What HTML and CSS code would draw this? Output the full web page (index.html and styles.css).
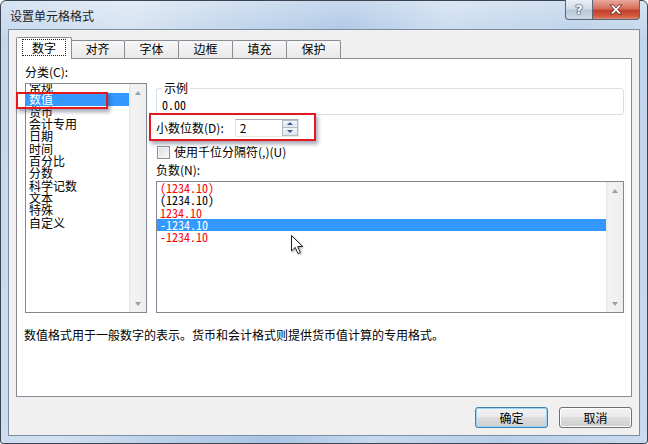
FILE: index.html
```html
<!DOCTYPE html>
<html lang="zh-CN">
  <head>
    <meta charset="UTF-8" />
    <title>设置单元格格式</title>
    <link rel="stylesheet" href="styles.css">
  </head>
  <body>
    <div class="window">
      <div class="titlebar">
        <span class="title">设置单元格格式</span>
        <div class="caption-buttons">
          <span class="btn-help">?</span>
          <span class="btn-close">
            <svg width="14" height="11" viewBox="0 0 14 11">
              <path d="M1 1 H4.5 L7 3.8 L9.5 1 H13 L8.8 5.5 L13 10 H9.5 L7 7.2 L4.5 10 H1 L5.2 5.5 Z" fill="#fff" stroke="#5a2019" stroke-width="0.8" />
            </svg>
          </span>
        </div>
      </div>

      <div class="client">
        <div class="tabs">
          <div class="tab active"><span class="focus">数字</span></div>
          <div class="tab">对齐</div>
          <div class="tab">字体</div>
          <div class="tab">边框</div>
          <div class="tab">填充</div>
          <div class="tab">保护</div>
        </div>

        <div class="panel">
          <div class="columns">
            <div class="col-left">
              <div class="label">分类(<u>C</u>):</div>
              <div class="listbox category">
                <ul class="items">
                  <li>常规</li>
                  <li class="selected">数值</li>
                  <li>货币</li>
                  <li>会计专用</li>
                  <li>日期</li>
                  <li>时间</li>
                  <li>百分比</li>
                  <li>分数</li>
                  <li>科学记数</li>
                  <li>文本</li>
                  <li>特殊</li>
                  <li>自定义</li>
                </ul>
                <div class="scrollbar">
                  <span class="arrow up"></span>
                  <span class="arrow down"></span>
                </div>
              </div>
            </div>

            <div class="col-right">
              <fieldset class="sample">
                <legend>示例</legend>
                <div class="mono">0.00</div>
              </fieldset>

              <div class="decimal-row">
                <span>小数位数(<u>D</u>):</span>
                <div class="spin">
                  <span class="spin-value">2</span>
                  <div class="spin-buttons">
                    <span class="spin-btn"><i class="tri up"></i></span>
                    <span class="spin-btn"><i class="tri down"></i></span>
                  </div>
                </div>
              </div>

              <label class="check-row">
                <span class="checkbox"></span>
                <span>使用千位分隔符(,)(<u>U</u>)</span>
              </label>

              <div class="label">负数(<u>N</u>):</div>
              <div class="listbox negatives">
                <ul class="items mono">
                  <li class="red">(1234.10)</li>
                  <li>(1234.10)</li>
                  <li class="red">1234.10</li>
                  <li class="selected">-1234.10</li>
                  <li class="red">-1234.10</li>
                </ul>
                <div class="scrollbar">
                  <span class="arrow up"></span>
                  <span class="arrow down"></span>
                </div>
                <svg class="cursor" width="14" height="21" viewBox="0 0 14 21">
                  <path d="M1.5 1.5 V17 L5.2 13.4 L8 19.6 L10.4 18.6 L7.7 12.5 H12.6 Z" fill="#fff" stroke="#222" stroke-width="1" stroke-linejoin="round" />
                </svg>
              </div>
            </div>
          </div>

          <p class="desc">数值格式用于一般数字的表示。货币和会计格式则提供货币值计算的专用格式。</p>

          <div class="mark mark-category"></div>
        </div>

        <div class="actions">
          <button class="button default">确定</button>
          <button class="button">取消</button>
        </div>
      </div>
    </div>
  </body>
</html>
```

FILE: styles.css
```css
* {
  box-sizing: border-box;
}

body {
  margin: 0;
  font-family: 'Noto Sans CJK SC', 'Noto Sans', sans-serif;
  font-size: 12px;
  color: #000;
  background: #fff;
}

u {
  text-decoration: none;
}

/* Window frame (Aero glass) */
.window {
  width: 648px;
  height: 444px;
  border: 1px solid #3b4450;
  border-radius: 6px 6px 3px 3px;
  padding: 0 7px 7px;
  background:
    linear-gradient(180deg, rgba(255, 255, 255, 0.35), rgba(255, 255, 255, 0) 40px),
    linear-gradient(100deg, #c2d6ec 0%, #d3e1f1 18%, #bcd2ea 32%, #a9c4e4 48%, #c6d9ee 62%, #b8cfe9 80%, #cadbef 100%);
  display: flex;
  flex-direction: column;
}

.titlebar {
  height: 28px;
  display: flex;
  justify-content: space-between;
  align-items: flex-start;
}

.title {
  padding: 6px 0 0 2px;
  line-height: 18px;
  font-size: 12px;
  color: #1e1e1e;
}

.caption-buttons {
  display: flex;
  margin-top: -1px;
}

.btn-help,
.btn-close {
  height: 20px;
  display: flex;
  align-items: center;
  justify-content: center;
  border: 1px solid #5b6676;
  border-top: none;
}

.btn-help {
  width: 27px;
  border-right: none;
  border-radius: 0 0 0 4px;
  background: linear-gradient(180deg, #e9eff6 0%, #d2dce8 45%, #bac8d8 55%, #ccd8e6 100%);
  color: #fff;
  font-family: 'DejaVu Sans', sans-serif;
  font-weight: bold;
  font-size: 13px;
  text-shadow: 0 0 1px #2c3a4c, 0 0 1px #2c3a4c, 0 0 2px #2c3a4c;
}

.btn-close {
  width: 48px;
  border-radius: 0 0 4px 0;
  background: linear-gradient(180deg, #e8a89c 0%, #d6705b 45%, #c2412a 55%, #d35b40 85%, #e08a6e 100%);
}

/* Client area */
.client {
  flex: 1;
  background: #f0f0f0;
  border: 1px solid #7d8c9f;
  display: flex;
  flex-direction: column;
}

.tabs {
  height: 28px;
  padding-left: 7px;
  display: flex;
  align-items: flex-end;
}

.tab {
  width: 55px;
  height: 18px;
  margin-left: -1px;
  border: 1px solid #898c95;
  border-bottom: none;
  border-radius: 2px 2px 0 0;
  background: linear-gradient(180deg, #f7f7f7, #e9e9e9);
  text-align: center;
  line-height: 16px;
}

.tab.active {
  position: relative;
  z-index: 2;
  width: 56px;
  height: 22px;
  margin-left: 0;
  margin-right: -1px;
  margin-bottom: -1px;
  background: #fff;
  padding-top: 2px;
}

.focus {
  display: inline-block;
  outline: 1px dotted #222;
  padding: 0 9px;
  line-height: 15px;
}

.panel {
  position: relative;
  height: 339px;
  margin: 0 7px;
  border: 1px solid #898c95;
  background: #fff;
  padding: 6px 7px 0 8px;
}

.columns {
  display: flex;
  gap: 9px;
}

.col-left {
  width: 122px;
}

.col-right {
  flex: 1;
  padding-top: 16px;
  display: flex;
  flex-direction: column;
}

.label {
  line-height: 14px;
}

/* List boxes */
.listbox {
  position: relative;
  margin-top: 4px;
  border: 1px solid #828790;
  background: #fff;
  display: flex;
  overflow: hidden;
}

.listbox.category {
  height: 230px;
}

.listbox.negatives {
  height: 132px;
}

.items {
  flex: 1;
  margin: 0;
  padding: 0;
  list-style: none;
}

.category .items {
  margin-top: -3px;
}

.items li {
  height: 12.33px;
  line-height: 12.33px;
  padding-left: 3px;
  white-space: nowrap;
}

.items li.selected {
  background: #3399ff;
  color: #fff;
}

.items li.red {
  color: #ff0000;
}

.mono {
  font-family: 'Noto Sans Mono CJK SC', 'Liberation Mono', monospace;
  font-size: 12px;
}

.scrollbar {
  width: 17px;
  background: linear-gradient(90deg, #e4e4e4 0%, #f3f3f3 15%, #eeeeee 100%);
  display: flex;
  flex-direction: column;
  justify-content: space-between;
}

.arrow {
  height: 17px;
  display: flex;
  align-items: center;
  justify-content: center;
}

.arrow::after {
  content: '';
  border-left: 3.5px solid transparent;
  border-right: 3.5px solid transparent;
}

.arrow.up::after {
  border-bottom: 4px solid #9aa0a8;
}

.arrow.down::after {
  border-top: 4px solid #9aa0a8;
}

.cursor {
  position: absolute;
  left: 133px;
  top: 52px;
  filter: drop-shadow(1px 1px 1px rgba(0, 0, 0, 0.3));
}

/* Sample group box */
.sample {
  margin: 0;
  min-width: 0;
  padding: 0 4px 2px 5px;
  border: 1px solid #d5dfe5;
  border-radius: 3px;
}

.sample legend {
  padding: 0 2px;
  line-height: 14px;
}

.sample .mono {
  margin-top: 3px;
  line-height: 14px;
}

/* Decimal places row with red highlight */
.decimal-row {
  position: relative;
  width: 167px;
  height: 28px;
  margin: -2px 0 0 -7px;
  padding-left: 5px;
  border: 2px solid #e3191f;
  box-shadow: 2px 3px 4px rgba(50, 60, 90, 0.45);
  display: flex;
  align-items: center;
  gap: 11px;
  background: #fff;
}

.spin {
  width: 64px;
  height: 18px;
  margin-top: 1px;
  border: 1px solid #abadb3;
  border-color: #abadb3 #e2e3ea #e3e9ef #e2e3ea;
  display: flex;
  align-items: center;
}

.spin-value {
  flex: 1;
  padding-left: 4px;
  line-height: 14px;
}

.spin-buttons {
  width: 16px;
  height: 16px;
  display: flex;
  flex-direction: column;
}

.spin-btn {
  flex: 1;
  display: flex;
  align-items: center;
  justify-content: center;
  border: 1px solid #b4bbc5;
  background: linear-gradient(180deg, #f4f6f8, #dfe5ec);
}

.spin-btn + .spin-btn {
  border-top: none;
}

.tri {
  border-left: 3px solid transparent;
  border-right: 3px solid transparent;
}

.tri.up {
  border-bottom: 3px solid #3d5d8a;
}

.tri.down {
  border-top: 3px solid #3d5d8a;
}

/* Checkbox row */
.check-row {
  margin-top: 4px;
  padding-left: 1px;
  line-height: 14px;
  display: flex;
  align-items: center;
  gap: 4px;
}

.checkbox {
  width: 13px;
  height: 13px;
  border: 1px solid #8e8f8f;
  background: linear-gradient(135deg, #dcdcdc, #fbfbfb);
  box-shadow: inset 0 0 0 1px #f4f4f4;
}

.col-right > .label {
  margin-top: 4px;
}

.desc {
  margin: 15px 0 0 -1px;
  line-height: 14px;
}

/* Red highlight around the selected category */
.mark {
  position: absolute;
  border: 2px solid #e3191f;
  box-shadow: 2px 3px 4px rgba(50, 60, 90, 0.45);
}

.mark-category {
  left: -1px;
  top: 33px;
  width: 92px;
  height: 17px;
}

/* Dialog buttons */
.actions {
  margin-top: 10px;
  padding-right: 7px;
  display: flex;
  justify-content: flex-end;
  gap: 11px;
}

.button {
  width: 73px;
  height: 21px;
  padding: 0;
  font-family: inherit;
  font-size: 12px;
  line-height: 17px;
  color: #000;
  border: 1px solid #707070;
  border-radius: 3px;
  background: linear-gradient(180deg, #f2f2f2 0%, #ebebeb 45%, #dddddd 50%, #cfcfcf 100%);
  box-shadow: inset 0 0 0 1px #fcfcfc;
}

.button.default {
  border-color: #3c7fb1;
  box-shadow: inset 0 0 0 1px #9fd6f5;
}
```
